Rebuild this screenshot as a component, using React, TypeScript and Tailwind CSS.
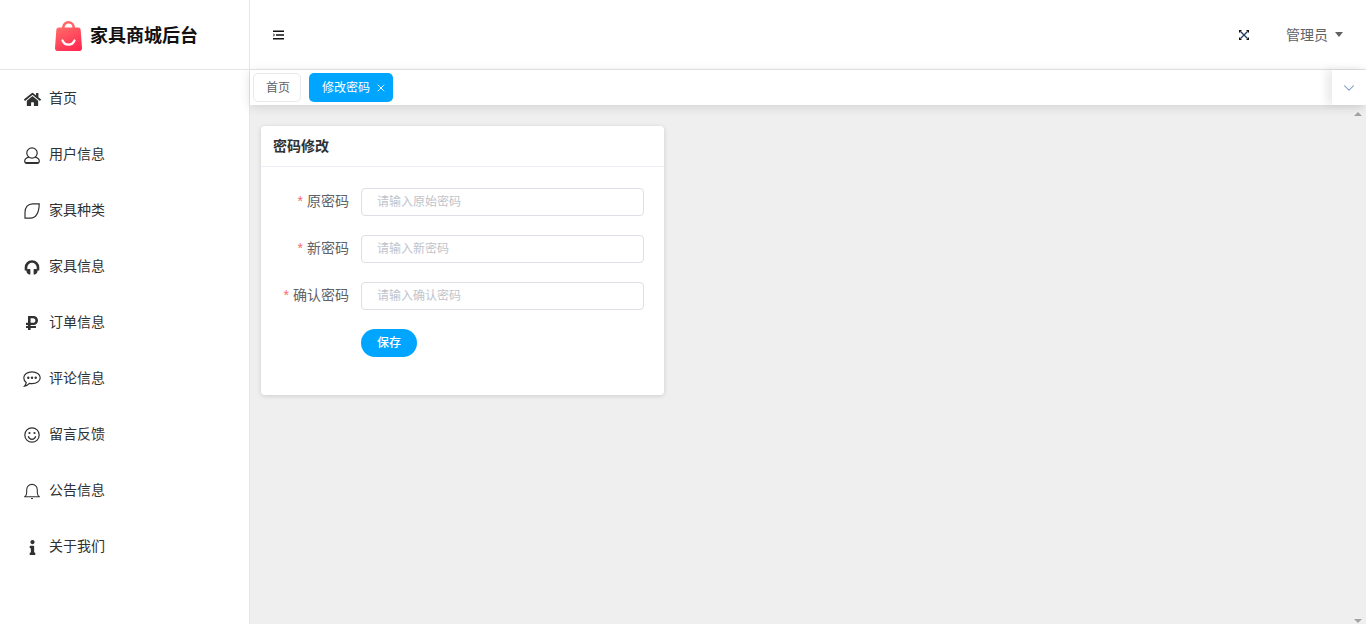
import { FaHome, FaRubleSign, FaInfo } from "react-icons/fa";
import { ChevronDown, X } from "lucide-react";

const iconClass = "w-4 h-4 text-[#303133]";

const UserIcon = () => (
  <svg viewBox="0 0 16 17" className="w-4 h-[17px] shrink-0 text-[#303133]" fill="none" stroke="currentColor" strokeWidth="1.200">
    <circle cx="8" cy="6" r="5.200" />
    <path d="M5 10.200C2.400 10.900.7 12.400.7 14c0 1.500 1 2.300 2.300 2.300h10c1.300 0 2.300-.8 2.300-2.300 0-1.600-1.700-3.100-4.300-3.800" />
    <path d="M1.500 15.700h13" strokeWidth="1.400" />
  </svg>
);

const LeafIcon = () => (
  <svg viewBox="0 0 16 16" className={iconClass} fill="none" stroke="currentColor" strokeWidth="1.200">
    <path d="M15.200.8H8.500C4 .8 1 4.200 1 9.500v5.700h5.500c4.900 0 8.700-4.700 8.700-14.400z" />
  </svg>
);

const HeadsetIcon = () => (
  <svg viewBox="0 0 16 16" className={iconClass}>
    <path d="M2 11.500V8.500a6 6 0 0 1 12 0v3" fill="none" stroke="currentColor" strokeWidth="2.600" />
    <path d="M4 10h1.600c.5 0 .8.300.8.800v4.200c0 .5-.5.800-1 .6C3.600 15 2.400 13.500 2.400 12c0-1.100.6-2 1.600-2zM12 10h-1.600c-.5 0-.8.300-.8.800v4.200c0 .5.500.8 1 .6 1.800-.6 3-2.100 3-3.600 0-1.100-.6-2-1.600-2z" fill="currentColor" />
  </svg>
);

const ChatIcon = () => (
  <svg viewBox="0 0 18 16" className="w-[18px] h-4 shrink-0 text-[#303133]" fill="none" stroke="currentColor" strokeWidth="1.200">
    <path d="M9 .8c4.500 0 8.200 2.600 8.200 5.900s-3.700 5.900-8.200 5.900c-.9 0-1.800-.1-2.600-.3-1.200 1.300-2.900 2.500-4.900 2.900.8-1 1.500-2.200 1.700-3.600C1.700 10.500.8 8.700.8 6.700.8 3.400 4.500.8 9 .8z" />
    <circle cx="5.300" cy="6.800" r="1.200" fill="currentColor" stroke="none" />
    <circle cx="9" cy="6.800" r="1.200" fill="currentColor" stroke="none" />
    <circle cx="12.700" cy="6.800" r="1.200" fill="currentColor" stroke="none" />
  </svg>
);

const SmileIcon = () => (
  <svg viewBox="0 0 16 16" className={iconClass} fill="none" stroke="currentColor" strokeWidth="1.200">
    <circle cx="8" cy="8" r="7.200" />
    <circle cx="5.500" cy="6" r="1.100" fill="currentColor" stroke="none" />
    <circle cx="10.500" cy="6" r="1.100" fill="currentColor" stroke="none" />
    <path d="M4.200 9.300c.7 1.900 2.100 3 3.800 3s3.100-1.100 3.800-3" />
  </svg>
);

const BellIcon = () => (
  <svg viewBox="0 0 16 16" className={iconClass} fill="none" stroke="currentColor" strokeWidth="1.100">
    <path d="M.8 13.800h14.400c-1.300-.9-1.900-2.300-1.900-4.300V6.800c0-3-2.300-5.400-5.300-5.400S2.700 3.800 2.700 6.800v2.700c0 2-.6 3.400-1.900 4.300z" />
    <path d="M7 15.600h2" />
  </svg>
);

const FullscreenIcon = () => (
  <svg viewBox="0 0 10 10" className="w-2.5 h-2.5 text-[#1f3a5f]" fill="none" stroke="currentColor" strokeWidth="1.300">
    <path d="M1.500 1.500l7 7M8.500 1.500l-7 7" />
    <path d="M0 0h3L0 3zM10 0H7l3 3zM0 10h3L0 7zM10 10H7l3-3z" fill="#111" stroke="none" />
  </svg>
);

const Logo = () => (
  <svg viewBox="0 0 27 30" className="w-[27px] h-[30px]">
    <defs>
      <linearGradient id="bag" x1="0.1" y1="0" x2="0.7" y2="1">
        <stop offset="0" stopColor="#ff6b68" />
        <stop offset="1" stopColor="#ff2b52" />
      </linearGradient>
    </defs>
    <path d="M8.300 9V6.500a5.200 5.200 0 0 1 10.400 0V9" fill="none" stroke="#ff6664" strokeWidth="2.600" />
    <path d="M4 6.500h19c1.600 0 2.600 1 2.700 2.500L27 27c.1 1.800-1 3-2.700 3H2.700C1 30-.1 28.800 0 27L1.300 9C1.400 7.500 2.400 6.500 4 6.500z" fill="url(#bag)" />
    <path d="M7.500 19.500c1.200 2.800 3.400 4.200 6 4.200s4.800-1.400 6-4.200" fill="none" stroke="#fff" strokeWidth="2.200" strokeLinecap="round" />
  </svg>
);

const navItems = [
  { label: "首页", icon: <FaHome className="w-[17px] h-[17px] shrink-0 text-[#303133]" /> },
  { label: "用户信息", icon: <UserIcon /> },
  { label: "家具种类", icon: <LeafIcon /> },
  { label: "家具信息", icon: <HeadsetIcon /> },
  { label: "订单信息", icon: <FaRubleSign className="w-4 h-4 shrink-0 text-[#303133]" /> },
  { label: "评论信息", icon: <ChatIcon /> },
  { label: "留言反馈", icon: <SmileIcon /> },
  { label: "公告信息", icon: <BellIcon /> },
  { label: "关于我们", icon: <FaInfo className="w-[15px] h-[15px] shrink-0 text-[#303133]" /> },
];

const fields = [
  { label: "原密码", placeholder: "请输入原始密码" },
  { label: "新密码", placeholder: "请输入新密码" },
  { label: "确认密码", placeholder: "请输入确认密码" },
];

export default function App() {
  return (
    <div className="h-[624px] w-[1366px] overflow-hidden flex flex-col bg-white font-['Liberation_Sans','Noto_Sans_CJK_SC',sans-serif] text-sm text-[#606266]">
      {/* top bar */}
      <header className="h-[70px] shrink-0 flex border-b border-[#e6e6e6]">
        <div className="w-[250px] shrink-0 border-r border-[#e6e6e6] flex items-center justify-center gap-2 pl-1 pt-[2px]">
          <Logo />
          <span className="text-lg font-bold text-[#111]">家具商城后台</span>
        </div>
        <div className="flex-1 flex items-center justify-between pl-[23px] pr-[23px]">
          <svg viewBox="0 0 12 10" className="w-3 h-2.5 text-[#111]" fill="none" stroke="currentColor" strokeWidth="1.400">
            <path d="M0 1.200h11M3 5h8M0 8.800h11" />
            <path d="M0 3.500L1.500 5 0 6.500" strokeWidth="1" />
          </svg>
          <div className="flex items-center">
            <FullscreenIcon />
            <span className="ml-[37px] text-sm text-[#606266]">管理员</span>
            <span className="ml-[7px] w-0 h-0 border-x-[4.5px] border-x-transparent border-t-[5px] border-t-[#606266]" />
          </div>
        </div>
      </header>

      <div className="flex-1 flex min-h-0">
        {/* side menu */}
        <nav className="w-[250px] shrink-0 border-r border-[#e6e6e6] pt-px">
          {navItems.map((item) => (
            <div key={item.label} className="h-14 flex items-center pl-6 text-sm text-[#303133]">
              <span className="w-4 flex justify-center">{item.icon}</span>
              <span className="ml-[9px] pb-[2px]">{item.label}</span>
            </div>
          ))}
        </nav>

        <main className="flex-1 flex flex-col min-w-0 bg-[#efefef]">
          {/* tab strip */}
          <div className="relative z-10 h-[35px] shrink-0 bg-white flex items-center pl-[3px] shadow-[0_2px_10px_rgba(0,0,0,0.12)]">
            <div className="h-[29px] w-12 flex items-center justify-center pl-[2px] border border-[#e9e9eb] rounded-[5px] text-xs text-[#606266]">
              首页
            </div>
            <div className="ml-2 h-[29px] w-[84px] flex items-center pl-[13px] gap-[5px] rounded-[5px] bg-[#00a5ff] text-xs text-white">
              修改密码
              <X className="w-3 h-3" strokeWidth={1.800} />
            </div>
            <div className="ml-auto w-[34px] h-full flex items-center justify-center bg-white shadow-[-6px_0_8px_rgba(0,0,0,0.08)]">
              <ChevronDown className="w-[18px] h-[18px] text-[#6f8fc4]" strokeWidth={1.400} />
            </div>
          </div>

          {/* scrolling content */}
          <div className="relative flex-1 pl-[11px] pt-[21px]">
            <div className="w-[403px] h-[269px] bg-white rounded-[4px] shadow-[0_1px_5px_rgba(0,0,0,0.14)]">
              <div className="h-[41px] flex items-center pl-3 border-b border-[#ebeef5] text-sm font-bold text-[#303133]">
                密码修改
              </div>
              <form className="pt-[21px]">
                {fields.map((field) => (
                  <div key={field.label} className="flex items-center h-7 mb-[19px]">
                    <label className="w-[88px] pb-[2px] text-right text-sm text-[#606266]">
                      <span className="text-[#f56c6c] mr-1">*</span>
                      {field.label}
                    </label>
                    <input
                      className="ml-3 w-[283px] h-7 px-[15px] border border-[#dcdfe6] rounded-[4px] text-xs outline-none placeholder:text-[#c0c4cc]"
                      placeholder={field.placeholder}
                    />
                  </div>
                ))}
                <div className="pl-[100px]">
                  <button type="button" className="w-14 h-7 rounded-full bg-[#00a5ff] text-xs font-medium text-white">
                    保存
                  </button>
                </div>
              </form>
            </div>
            {/* scrollbar arrows */}
            <span className="absolute right-[4px] top-[7px] w-0 h-0 border-x-[4px] border-x-transparent border-b-[4px] border-b-[#a3a3a3]" />
            <span className="absolute right-[4px] bottom-[1px] w-0 h-0 border-x-[4px] border-x-transparent border-t-[4px] border-t-[#a3a3a3]" />
          </div>
        </main>
      </div>
    </div>
  );
}
